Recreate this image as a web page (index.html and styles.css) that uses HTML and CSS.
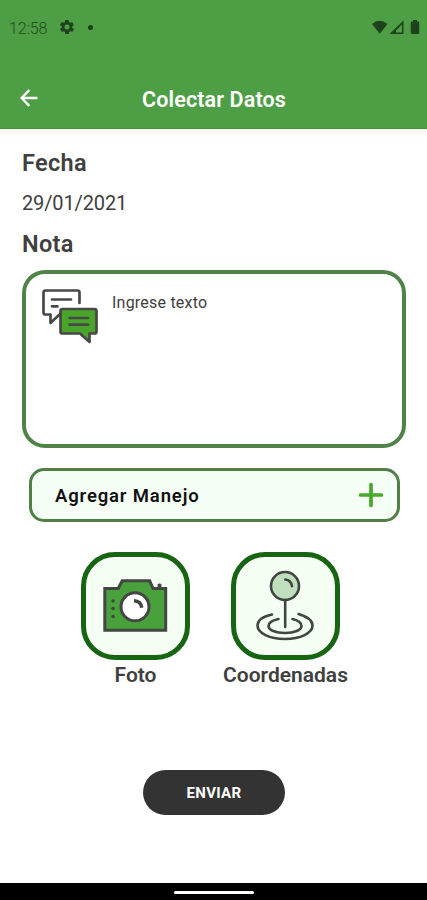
FILE: index.html
```html
<!DOCTYPE html>
<html lang="es">
<head>
<meta charset="utf-8">
<title>Colectar Datos</title>
<link rel="stylesheet" href="styles.css">
</head>
<body>
<div class="app">
  <header class="header">
    <div class="status">
      <span class="time">12:58</span>
      <svg class="gear" width="14" height="14" viewBox="2 2 20 20"><path fill="currentColor" fill-rule="evenodd" d="M19.4 13a7.800 7.800 0 0 0 0-2l2.100-1.600a.5.500 0 0 0 .1-.6l-2-3.500a.5.500 0 0 0-.6-.2l-2.500 1a7.300 7.300 0 0 0-1.700-1l-.4-2.700a.5.500 0 0 0-.5-.4h-4a.5.500 0 0 0-.5.400l-.4 2.700a7.700 7.700 0 0 0-1.700 1l-2.500-1a.5.500 0 0 0-.6.200l-2 3.500a.5.500 0 0 0 .1.600L4.600 11a7.800 7.800 0 0 0 0 2l-2.100 1.600a.5.500 0 0 0-.1.600l2 3.500c.1.200.4.300.6.200l2.500-1a7.300 7.300 0 0 0 1.700 1l.4 2.700c0 .2.200.4.500.4h4c.3 0 .5-.2.500-.4l.4-2.700a7.700 7.700 0 0 0 1.700-1l2.500 1c.2.100.5 0 .6-.2l2-3.500a.5.500 0 0 0-.1-.6zM12 15.600a3.600 3.600 0 1 1 0-7.200 3.600 3.600 0 0 1 0 7.200z"/></svg>
      <span class="dot"></span>
      <svg class="signals" width="48" height="15" viewBox="0 0 48 15"><path fill="currentColor" d="M0 4Q7.700-2.600 15.500 4L7.800 13.700z"/><path fill="currentColor" fill-rule="evenodd" d="M17.500 14 31.500.500V14zM24 12.500H30V4.500L24 10.500z"/><path fill="currentColor" d="M41 0h4v1.500h1.200q1 0 1 1V13q0 1-1 1h-6.400q-1 0-1-1V2.500q0-1 1-1H41z"/></svg>
    </div>
    <div class="toolbar">
      <svg class="back" width="18" height="18" viewBox="0 0 18 18" fill="none" stroke="#fff" stroke-width="2.300"><path d="M17.400 9H1.800M9.300 1.100 1.500 9l7.800 7.900"/></svg>
      <h1 class="title">Colectar Datos</h1>
    </div>
  </header>
  <main class="content">
    <h2 class="heading">Fecha</h2>
    <p class="date">29/01/2021</p>
    <h2 class="heading">Nota</h2>
    <div class="note">
      <svg width="56" height="55" viewBox="0 0 56 55" fill="none" stroke="#484848" stroke-width="2.700" stroke-linecap="round" stroke-linejoin="round"><path d="M37.500 14V3.500q0-2-2-2H3.500q-2 0-2 2v20q0 2 2 2h5v8.500L18 25"/><path d="M10 10.500h19M10 17.300h5.500"/><path fill="#48a52a" d="M20.500 20h32q2 0 2 2v20.500q0 2-2 2h-5V53l-9.500-8.500H20.500q-2 0-2-2V22q0-2 2-2z"/><path d="M27.500 29h18.500M27.500 35.700h18.500"/></svg>
      <span class="placeholder">Ingrese texto</span>
    </div>
    <div class="manage">
      <span class="manage-label">Agregar Manejo</span>
      <svg width="26" height="26" viewBox="0 0 26 26" fill="none" stroke="#48aa2c" stroke-width="3.700" stroke-linecap="round"><path d="M2.500 13h21M13 2.500v21"/></svg>
    </div>
    <div class="actions">
      <div class="action">
        <div class="tile"><svg width="98" height="98" viewBox="1.500 0 98 98" fill="none" stroke="#454545" stroke-width="3"><path fill="#49a13c" d="M19.300 31.500h13.400l4-7.800h27.500l3.300 7.800h12.700v41.700H19.300z"/><circle cx="49.500" cy="49.800" r="14" fill="#fff"/><path stroke-width="3.500" d="M48.500 43.800q7 .2 7.700 7"/><g fill="#454545" stroke="none"><circle cx="27.500" cy="44" r="1.800"/><circle cx="27.500" cy="51.500" r="1.800"/><circle cx="27.500" cy="59.500" r="1.800"/><rect x="72" y="26.500" width="4" height="4" rx="1.500"/></g></svg></div>
        <span class="action-label">Foto</span>
      </div>
      <div class="action">
        <div class="tile"><svg width="98" height="98" viewBox="1 0 98 98" fill="none" stroke="#414541" stroke-width="2.600" stroke-linecap="round"><circle cx="49" cy="29" r="14" fill="#c0dfbd"/><path d="M49.300 22.500q5.800.5 6.700 6.800M49.200 43v27"/><path d="M42.500 62c-7 1.500-10 4-10 7 0 4 7 7 16.500 7s16.500-3 16.500-7c0-3-3-5.500-9-7"/><path d="M36 57.500c-9 2-14.500 6-14.500 11C21.500 76 33.500 82 49 82s27.500-6 27.500-13.500c0-5-5.500-9-14-11.500"/></svg></div>
        <span class="action-label">Coordenadas</span>
      </div>
    </div>
    <button class="send">ENVIAR</button>
  </main>
  <footer class="navbar"><span class="pill"></span></footer>
</div>
</body>
</html>
```
FILE: styles.css
```css
* { box-sizing: border-box; }
body { margin: 0; font-family: Roboto, sans-serif; background: #fff; color: #404040; }
h1, h2, p { margin: 0; }
svg { display: block; flex: none; }
.app { width: 427px; height: 900px; display: flex; flex-direction: column; overflow: hidden; }
.header { height: 128.5px; background: #4d9e44; border-bottom: 1px solid #419038; }
.status { height: 56px; padding-left: 9px; display: flex; align-items: center; color: #1d431a; }
.time { width: 48px; font-size: 16px; font-weight: 300; letter-spacing: -.1px; color: #234d20; }
.gear { margin-left: 3px; margin-top: -2px; }
.dot { width: 5px; height: 5px; margin-left: 14px; margin-top: -2px; border-radius: 50%; background: currentColor; }
.signals { margin: -2px 7px 0 auto; }
.toolbar { height: 72px; padding: 14px 0 0 20px; display: flex; align-items: flex-start; }
.back { margin-top: 19px; }
.title { margin: 18px 0 0 104px; font-size: 21.500px; line-height: 24px; font-weight: 600; letter-spacing: .13px; color: #fff; white-space: nowrap; }
.content { height: 754.500px; padding: 20.500px 21px 0 22px; display: flex; flex-direction: column; }
.heading { font-size: 23.500px; line-height: 28px; font-weight: 600; letter-spacing: .3px; }
.date { height: 53px; padding-top: 12px; font-size: 20px; line-height: 28px; letter-spacing: -.12px; }
.note { height: 178.500px; margin-top: 11.500px; padding: 15.500px 16px; display: flex; align-items: flex-start; border: 4px solid #508348; border-radius: 23px; background: #fefffe; }
.placeholder { margin: 4px 0 0 14px; font-size: 16px; line-height: 20px; letter-spacing: .22px; }
.manage { height: 54px; margin: 19.500px 6.500px 0 7px; padding: 0 13px 0 23px; display: flex; align-items: center; justify-content: space-between; border: 3px solid #508048; border-radius: 15px; background: #f6fff5; }
.manage-label { margin-top: 2px; font-size: 18.500px; font-weight: 600; letter-spacing: .85px; color: #111; }
.actions { display: flex; margin: 30px 0 0 59px; gap: 41px; }
.action { width: 109px; display: flex; flex-direction: column; align-items: center; }
.tile { width: 109px; height: 108px; padding: .5px; border: 5px solid #176413; border-radius: 34px; background: #f5fff4; }
.action-label { margin-top: 2px; font-size: 21px; line-height: 26px; font-weight: 600; letter-spacing: 0; white-space: nowrap; }
.send { width: 142px; height: 45px; margin: 82px 0 0 121px; padding: 1px 0 0; border: 0; border-radius: 23px; background: #333; color: #fff; font: 700 15px/20px Roboto, sans-serif; letter-spacing: .3px; }
.navbar { height: 17px; background: #000; display: flex; justify-content: center; padding-top: 8px; }
.pill { width: 80px; height: 3px; border-radius: 2px; background: #fff; }
```
